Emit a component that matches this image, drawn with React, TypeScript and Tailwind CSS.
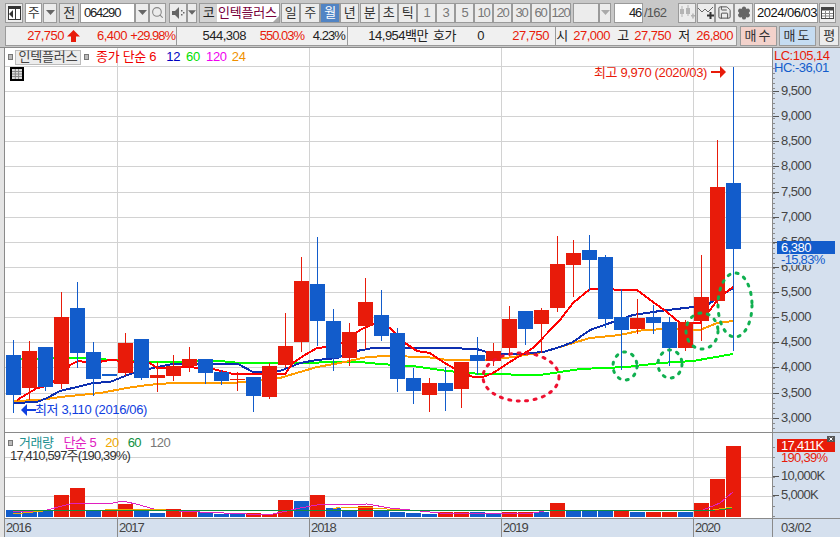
import React from "react";
import { Search, Save, Settings } from "lucide-react";

const RED = "#e81b0a";
const BLUE = "#125ccb";

// x, up?, high, bodyTop, bodyBottom, low (page px)
const candles: [number, number, number, number, number, number][] = [
  [6, 0, 340, 355, 395, 413], [22, 1, 341, 351, 388, 400], [38, 0, 347, 347, 387, 391], [54, 1, 292, 317, 384, 389],
  [70, 0, 282, 308, 353, 368], [86, 0, 342, 352, 379, 396], [102, 0, 374, 374, 376, 376], [118, 1, 333, 343, 373, 376],
  [134, 0, 339, 339, 378, 380], [150, 1, 362, 375, 378, 392], [166, 1, 355, 366, 376, 381], [182, 1, 347, 359, 366, 372],
  [198, 0, 359, 359, 373, 384], [214, 0, 370, 372, 381, 385], [230, 1, 372, 379, 380, 391], [246, 0, 377, 377, 396, 412],
  [262, 1, 363, 366, 397, 399], [278, 1, 313, 346, 365, 368], [294, 1, 257, 281, 342, 352], [310, 0, 237, 284, 321, 346],
  [326, 0, 309, 321, 358, 371], [342, 1, 323, 332, 358, 366], [358, 1, 278, 302, 326, 349], [374, 0, 290, 315, 336, 341],
  [390, 0, 328, 333, 379, 392], [406, 0, 368, 378, 391, 404], [422, 1, 378, 383, 395, 412], [438, 0, 367, 383, 391, 411],
  [454, 1, 362, 362, 389, 408], [470, 0, 337, 355, 361, 375], [486, 1, 343, 351, 361, 366], [502, 1, 306, 319, 348, 356],
  [518, 0, 311, 311, 329, 345], [534, 1, 308, 310, 324, 353], [550, 1, 236, 264, 308, 312], [566, 1, 240, 253, 265, 297],
  [582, 0, 235, 250, 260, 291], [598, 0, 255, 257, 319, 328], [614, 0, 289, 317, 330, 370], [630, 1, 299, 318, 329, 334],
  [646, 0, 305, 317, 323, 334], [662, 0, 317, 322, 348, 366], [678, 1, 320, 322, 348, 351], [694, 1, 255, 297, 321, 341],
  [710, 1, 140, 187, 301, 305], [726, 0, 67, 183, 249, 351],
];

// x, up?, top (page px)
const volumes: [number, number, number][] = [
  [6, 0, 510], [22, 0, 511], [38, 0, 511], [54, 1, 495], [70, 1, 488], [86, 0, 510], [102, 1, 511], [118, 1, 504],
  [134, 0, 511], [150, 0, 513], [166, 1, 509], [182, 1, 511], [198, 0, 512], [214, 0, 514], [230, 0, 513], [246, 1, 513],
  [262, 1, 514], [278, 1, 500], [294, 0, 501], [310, 1, 495], [326, 0, 508], [342, 0, 510], [358, 1, 506], [374, 0, 511],
  [390, 0, 512], [406, 0, 513], [422, 0, 514], [438, 1, 512], [454, 1, 512], [470, 0, 512], [486, 0, 514], [502, 1, 512],
  [518, 1, 512], [534, 0, 512], [550, 1, 503], [566, 0, 511], [582, 0, 511], [598, 0, 511], [614, 1, 510], [630, 0, 512],
  [646, 1, 512], [662, 1, 512], [678, 0, 512], [694, 1, 503], [710, 1, 479], [726, 1, 446],
];

const ma60 = "13,359 80,358 150,362 220,361 240,363 280,363 360,362 380,364 413,366 447,371 480,374 540,375 560,372 580,369 627,367 660,363 693,361 733,354";
const ma24 = "13,401 40,400 60,397 100,393 127,388 147,385 173,383 233,383 280,378 300,372 317,367 340,363 367,357 387,356 427,357 447,360 487,360 513,357 543,352 560,347 590,338 620,335 643,330 670,329 700,330 717,323 733,321";
const ma12 = "14,403 37,402 47,398 60,391 77,387 93,383 110,382 130,374 157,367 173,364 200,364 238,364 253,372 280,371 300,363 317,360 337,358 357,351 373,348 447,348 477,349 493,354 520,354 543,352 560,347 573,342 590,330 610,323 633,315 660,311 693,307 707,305 733,288";
const ma6 = "17,400 37,388 43,387 62,377 70,365 78,361 93,363 110,360 150,363 157,368 173,368 187,367 213,369 233,374 285,374 293,363 303,356 317,348 337,346 360,330 377,322 390,328 405,343 417,351 430,353 443,362 457,370 473,377 483,377 493,373 513,360 533,348 560,320 573,303 590,289 637,290 653,302 667,312 680,323 700,323 710,310 720,297 733,287";

const volMa5 = "13,512 43,511 70,504 77,503 113,503 123,501 140,505 157,510 200,512 247,514 273,514 300,508 317,505 367,504 390,508 420,511 440,513 533,513 550,510 597,510 620,510 653,511 703,510 720,503 733,492";
const volMa20 = "13,514 43,511 167,509 333,509 340,507 373,508 400,510 550,510 713,510 732,507";
const volMa60 = "13,510 420,511 720,510 732,508";

const priceTicks = [66, 91, 116, 141, 166, 192, 217, 242, 267, 292, 317, 342, 367, 393, 418];
const gridX = [117, 309, 501, 693];

function Btn({ className = "", bg = "bg-[#ececec]", children }: { className?: string; bg?: string; children?: React.ReactNode }) {
  return (
    <div className={`flex h-[20px] shrink-0 items-center justify-center border border-[#9a9a9a] ${bg} ${className}`}>
      {children}
    </div>
  );
}

function Caret({ light }: { light?: boolean }) {
  return (
    <svg width="9" height="5" viewBox="0 0 9 5">
      <polygon points="0,0 9,0 4.5,5" fill={light ? "#aaa" : "#666"} />
    </svg>
  );
}

function Toolbar() {
  return (
    <div className="flex h-[24px] items-center pl-[5px] pt-[1px] text-[#333]">
      <Btn className="w-[18px]">
        <svg width="13" height="14" viewBox="0 0 13 14">
          <rect x="0.5" y="0.5" width="12" height="13" fill="#fff" stroke="#333" />
          <rect x="1" y="1" width="11" height="2" fill="#333" />
          <rect x="7" y="3" width="1" height="10" fill="#333" />
          <polygon points="5,4 5,12 1,8" fill="#333" />
        </svg>
      </Btn>
      <Btn className="ml-[2px] w-[17px]" bg="bg-white">주</Btn>
      <Btn className="ml-[1px] w-[14px]"><Caret /></Btn>
      <Btn className="ml-[2px] w-[20px]" bg="bg-[#e2e2e2]">전</Btn>
      <div className="ml-[1px] flex h-[20px] w-[55px] shrink-0 items-center border border-[#9a9a9a] bg-white pl-[3px] tracking-[-1.2px] text-[#222]">064290</div>
      <Btn className="w-[14px]"><Caret /></Btn>
      <Btn className="w-[17px]"><Search size={13} color="#888" strokeWidth={2} /></Btn>
      <Btn className="ml-[3px] w-[18px]">
        <svg width="13" height="12" viewBox="0 0 13 12">
          <polygon points="0,4 3,4 7,0 7,12 3,8 0,8" fill="#666" />
          <rect x="9" y="3" width="1.5" height="1.5" fill="#666" />
          <rect x="9" y="7" width="1.5" height="1.5" fill="#666" />
          <rect x="11" y="5" width="1.5" height="1.5" fill="#666" />
        </svg>
      </Btn>
      <Btn className="w-[10px]"><Caret /></Btn>
      <div className="relative ml-[2px] flex h-[20px] w-[81px] shrink-0 items-center border border-[#9a9a9a] bg-white">
        <span className="flex h-full w-[17px] items-center justify-center bg-[#d4d4d4] text-[#222]">코</span>
        <span className="pl-[1px] text-[13px] tracking-[-0.2px] text-[#78003c]">인텍플러스</span>
        <span className="absolute bottom-0 right-0 h-0 w-0 border-b-[6px] border-l-[6px] border-b-[#aaa] border-l-transparent" />
      </div>
      <Btn className="ml-[1px] w-[19px]">일</Btn>
      <Btn className="w-[20px]">주</Btn>
      <Btn className="w-[20px] text-white" bg="bg-[#5184c4]">월</Btn>
      <Btn className="w-[19px]">년</Btn>
      <Btn className="ml-[1px] w-[19px]">분</Btn>
      <Btn className="w-[19px]">초</Btn>
      <Btn className="w-[19px]">틱</Btn>
      <Btn className="w-[19px] tracking-[-1.2px] text-[#777]">1</Btn>
      <Btn className="w-[19px] tracking-[-1.2px] text-[#777]">3</Btn>
      <Btn className="w-[19px] tracking-[-1.2px] text-[#777]">5</Btn>
      <Btn className="w-[19px] tracking-[-1.2px] text-[#777]">10</Btn>
      <Btn className="w-[19px] tracking-[-1.2px] text-[#777]">20</Btn>
      <Btn className="w-[19px] tracking-[-1.2px] text-[#777]">30</Btn>
      <Btn className="w-[19px] tracking-[-1.2px] text-[#777]">60</Btn>
      <Btn className="w-[21px] tracking-[-1.2px] text-[#777]">120</Btn>
      <Btn className="ml-[2px] w-[26px]" />
      <Btn className="w-[12px]"><Caret light /></Btn>
      <div className="ml-[3px] flex h-[20px] w-[29px] shrink-0 items-center justify-end border border-[#9a9a9a] bg-white pr-[1px] tracking-[-1.2px] text-[#222]">46</div>
      <span className="w-[35px] shrink-0 pl-[1px] tracking-[-0.8px] text-[#555]">/162</span>
      <Btn className="w-[18px]">
        <svg width="16" height="15" viewBox="0 0 16 15" fill="#b4b4b4">
          <rect x="1" y="4" width="4" height="5" /><rect x="2.5" y="1" width="1" height="11" />
          <rect x="7" y="3" width="4" height="6" /><rect x="8.5" y="0" width="1" height="11" />
          <rect x="12" y="10" width="4" height="1.5" /><rect x="13.2" y="8.5" width="1.5" height="5" />
        </svg>
      </Btn>
      <Btn className="ml-[1px] w-[18px]">
        <svg width="16" height="15" viewBox="0 0 16 15">
          <polyline points="0,3 4,7 7,4 10,7 15,2" fill="none" stroke="#666" />
          <rect x="11.5" y="7" width="2" height="7" fill="#333" /><rect x="9" y="9.5" width="7" height="2" fill="#333" />
        </svg>
      </Btn>
      <Btn className="w-[19px]"><Save size={15} color="#555" strokeWidth={1.6} /></Btn>
      <Btn className="w-[19px]"><Settings size={14} color="#666" fill="#666" strokeWidth={2.5} /></Btn>
      <div className="ml-[1px] flex h-[20px] w-[64px] shrink-0 items-center border border-[#9a9a9a] bg-white pl-[2px] text-[#111]">2024/06/03</div>
      <Btn className="ml-[1px] w-[17px]">
        <svg width="13" height="12" viewBox="0 0 13 12">
          <rect x="0.5" y="0.5" width="12" height="11" fill="#fff" stroke="#444" />
          <rect x="1" y="1" width="11" height="2.5" fill="#444" />
          <path d="M1 6.5H12M1 9H12M4.5 4V11M8.5 4V11" stroke="#888" />
        </svg>
      </Btn>
    </div>
  );
}

function QuoteBar() {
  return (
    <div className="flex h-[23px] items-center pl-[5px] text-[#e81b0a]">
      <div className="flex h-[20px] w-[172px] shrink-0 items-center border border-[#9a9a9a] bg-[#f0f0f0]">
        <span className="w-[58px] text-right">27,750</span>
        <svg className="ml-[3px] shrink-0" width="13" height="12" viewBox="0 0 13 12"><polygon points="6.5,0 13,6.5 9,6.5 9,12 4,12 4,6.5 0,6.5" fill="#e81b0a" /></svg>
        <span className="w-[47px] text-right">6,400</span>
        <span className="w-[48px] text-right tracking-[-1px]">+29.98%</span>
      </div>
      <div className="flex h-[20px] w-[171px] shrink-0 items-center border border-l-0 border-[#9a9a9a] bg-[#f0f0f0]">
        <span className="w-[69px] text-right text-[#222]">544,308</span>
        <span className="w-[58px] text-right tracking-[-1px]">550.03%</span>
        <span className="w-[41px] text-right tracking-[-0.9px] text-[#222]">4.23%</span>
      </div>
      <div className="flex h-[20px] w-[208px] shrink-0 items-center border border-l-0 border-[#9a9a9a] bg-[#f0f0f0]">
        <span className="w-[80px] text-right text-[#222]">14,954백만</span>
        <span className="ml-[5px] w-[24px] text-[#222]">호가</span>
        <span className="w-[27px] text-right text-[#222]">0</span>
        <span className="w-[65px] text-right">27,750</span>
      </div>
      <div className="flex h-[20px] w-[181px] shrink-0 items-center border border-l-0 border-[#9a9a9a] bg-[#f0f0f0]">
        <span className="w-[12px] text-center text-[#222]">시</span>
        <span className="w-[42px] text-right">27,000</span>
        <span className="ml-[7px] w-[12px] text-center text-[#222]">고</span>
        <span className="w-[42px] text-right">27,750</span>
        <span className="ml-[7px] w-[12px] text-center text-[#222]">저</span>
        <span className="w-[43px] text-right">26,800</span>
      </div>
      <Btn className="ml-[3px] w-[37px] tracking-[2px] text-[#333]" bg="bg-[#f3d2cb]">매수</Btn>
      <Btn className="ml-[2px] w-[37px] tracking-[2px] text-[#333]" bg="bg-[#c5dcf2]">매도</Btn>
      <Btn className="ml-[3px] w-[20px] text-[#333]">평</Btn>
    </div>
  );
}

function Candles() {
  return (
    <g shapeRendering="crispEdges">
      {candles.map(([x, up, hi, top, bot, lo]) => {
        const c = up ? RED : BLUE;
        return (
          <g key={x}>
            <rect x={x + 7} y={hi} width={1} height={lo - hi} fill={c} />
            <rect x={x} y={top} width={15} height={Math.max(bot - top, 1)} fill={c} />
          </g>
        );
      })}
    </g>
  );
}

function PriceChart() {
  return (
    <svg width="767" height="384" viewBox="5 48 767 384" className="block shrink-0 bg-white">
      <g shapeRendering="crispEdges" fill="#d2d2d2">
        {priceTicks.map((y) => <rect key={y} x="5" y={y} width="767" height="1" />)}
        {gridX.map((x) => <rect key={x} x={x} y="48" width="1" height="384" />)}
      </g>
      <g fill="none" strokeWidth="2" shapeRendering="crispEdges">
        <polyline points={ma60} stroke="#00ff00" />
        <polyline points={ma24} stroke="#ff9c00" />
        <polyline points={ma12} stroke="#0d2fb0" />
        <polyline points={ma6} stroke="#ff0000" />
      </g>
      <Candles />
      <g fill="none" strokeWidth="3" strokeDasharray="2 6.5" strokeLinecap="round">
        <ellipse cx="521" cy="377" rx="38" ry="24" stroke="#ee1030" />
        <ellipse cx="625" cy="366" rx="12" ry="14" stroke="#10b050" />
        <ellipse cx="670" cy="364" rx="12" ry="14" stroke="#10b050" />
        <ellipse cx="702" cy="331" rx="16" ry="18" stroke="#10b050" />
        <ellipse cx="735" cy="305" rx="17" ry="32" stroke="#10b050" />
      </g>
      <text x="594" y="77" className="fill-[#e81b0a] text-[13px] tracking-[-0.35px]">최고 9,970 (2020/03)</text>
      <rect x="711" y="71" width="10" height="2" fill="#e81b0a" shapeRendering="crispEdges" />
      <polygon points="720,66 726,72 720,78" fill="#e81b0a" />
      <text x="35" y="414" className="fill-[#1040e0] text-[13px] tracking-[-0.35px]">최저 3,110 (2016/06)</text>
      <rect x="26" y="409" width="10" height="2" fill="#1040e0" shapeRendering="crispEdges" />
      <polygon points="27,404 21,410 27,416" fill="#1040e0" />
    </svg>
  );
}

function PriceAxis() {
  const minor = [];
  for (let y = 68; y < 430; y += 5) minor.push(y);
  const labels = ["9,500", "9,000", "8,500", "8,000", "7,500", "7,000", "6,500", "6,000", "5,500", "5,000", "4,500", "4,000", "3,500", "3,000"];
  return (
    <svg width="68" height="384" viewBox="772 48 68 384" className="block shrink-0 bg-[#d5e0ee]">
      <rect x="772" y="48" width="1" height="384" fill="#8a8a8a" shapeRendering="crispEdges" />
      {minor.map((y) => <rect key={y} x="773" y={y} width="2" height="1" fill="#8a8a8a" shapeRendering="crispEdges" />)}
      {priceTicks.slice(1).map((y, i) => (
        <g key={y}>
          <rect x="773" y={y} width="6" height="1" fill="#555" shapeRendering="crispEdges" />
          <text x="781" y={y + 4} className="fill-[#444] text-[13px] tracking-[-0.5px]">{labels[i]}</text>
        </g>
      ))}
      <text x="774" y="60" className="fill-[#e81b0a] text-[13px] tracking-[-0.5px]">LC:105,14</text>
      <text x="774" y="72" className="fill-[#125ccb] text-[13px] tracking-[-0.5px]">HC:-36,01</text>
      <rect x="777" y="241" width="58" height="13" fill="#125ccb" shapeRendering="crispEdges" />
      <text x="781" y="252" className="fill-white text-[13px] tracking-[-0.5px]">6,380</text>
      <rect x="777" y="254" width="58" height="11" fill="#d5e0ee" shapeRendering="crispEdges" />
      <text x="781" y="264" className="fill-[#125ccb] text-[13px] tracking-[-0.7px]">-15,83%</text>
    </svg>
  );
}

function Legend() {
  return (
    <div className="absolute left-[3px] top-0 flex h-[18px] items-center text-[13px] tracking-[-0.3px]">
      <span className="h-[6px] w-[5px] border border-[#777] bg-[#bbb]" />
      <span className="ml-[2px] flex h-[15px] w-[66px] items-center justify-center border border-[#bbb] bg-[#ececec] tracking-[-0.2px] text-[#444]">인텍플러스</span>
      <span className="ml-[3px] h-[6px] w-[5px] border border-[#777] bg-[#bbb]" />
      <span className="ml-[7px] text-[#f00000]">종가 단순 6</span>
      <span className="ml-[10px] text-[#0000c0]">12</span>
      <span className="ml-[6px] text-[#00e000]">60</span>
      <span className="ml-[6px] text-[#f000f0]">120</span>
      <span className="ml-[5px] text-[#f09000]">24</span>
    </div>
  );
}

function VolumeChart() {
  return (
    <svg width="767" height="85" viewBox="5 433 767 85" className="block shrink-0 bg-white">
      <g shapeRendering="crispEdges" fill="#d2d2d2">
        {[457, 477, 496].map((y) => <rect key={y} x="5" y={y} width="767" height="1" />)}
        {gridX.map((x) => <rect key={x} x={x} y="433" width="1" height="85" />)}
      </g>
      <g shapeRendering="crispEdges">
        {volumes.map(([x, up, top]) => (
          <rect key={x} x={x} y={top} width={15} height={517 - top} fill={up ? RED : BLUE} />
        ))}
      </g>
      <g fill="none" shapeRendering="crispEdges">
        <polyline points={volMa5} stroke="#e020c0" />
        <polyline points={volMa20} stroke="#f0a800" />
        <polyline points={volMa60} stroke="#109040" />
      </g>
    </svg>
  );
}

function VolumeAxis() {
  return (
    <svg width="68" height="85" viewBox="772 433 68 85" className="block shrink-0 bg-[#d5e0ee]">
      <rect x="772" y="433" width="1" height="85" fill="#8a8a8a" shapeRendering="crispEdges" />
      {[447, 457, 467, 477, 486, 496, 506, 516].map((y) => (
        <rect key={y} x="773" y={y} width="2" height="1" fill="#8a8a8a" shapeRendering="crispEdges" />
      ))}
      <rect x="773" y="476" width="6" height="1" fill="#555" shapeRendering="crispEdges" />
      <rect x="773" y="495" width="6" height="1" fill="#555" shapeRendering="crispEdges" />
      <rect x="777" y="439" width="58" height="13" fill="#e81b0a" shapeRendering="crispEdges" />
      <text x="781" y="450" className="fill-white text-[13px] tracking-[-0.7px]">17,411K</text>
      <text x="781" y="462" className="fill-[#e81b0a] text-[13px] tracking-[-0.7px]">190,39%</text>
      <text x="781" y="480" className="fill-[#444] text-[13px] tracking-[-0.7px]">10,000K</text>
      <text x="781" y="499" className="fill-[#444] text-[13px] tracking-[-0.7px]">5,000K</text>
      <rect x="827" y="436" width="8" height="6" fill="#555" shapeRendering="crispEdges" />
      <path d="M829.5 437.5L832.5 440.5M832.5 437.5L829.5 440.5" stroke="#fff" />
    </svg>
  );
}

function TimeAxis() {
  const years = [
    { label: "2016", w: "w-[112px]" },
    { label: "2017", w: "w-[192px]" },
    { label: "2018", w: "w-[192px]" },
    { label: "2019", w: "w-[192px]" },
    { label: "2020", w: "w-[79px]" },
  ];
  return (
    <div className="flex h-[19px] border-t border-[#8a8a8a] bg-[#d5e0ee] tracking-[-1.1px] text-[#444]">
      {years.map((y, i) => (
        <div key={y.label} className={`${y.w} flex items-center ${i > 0 ? "border-l border-[#8a8a8a]" : ""} pl-[1px]`}>{y.label}</div>
      ))}
      <div className="flex w-[68px] items-center border-l border-[#8a8a8a] pl-[8px] tracking-[-0.5px]">03/02</div>
    </div>
  );
}

export default function App() {
  return (
    <div className="flex h-[537px] w-[840px] flex-col overflow-hidden bg-[#c8c8c8] font-['Liberation_Sans','Noto_Sans_CJK_KR',sans-serif] text-[13px] tracking-[-0.5px]">
      <Toolbar />
      <QuoteBar />
      <div className="flex-1 border-t border-[#8a8a8a] bg-[#e4e4e4] pl-[4px]">
        <div className="flex flex-col border-l border-[#8a8a8a]">
          <div className="relative flex">
            <PriceChart />
            <PriceAxis />
            <Legend />
            <div className="absolute left-[5px] top-[19px] flex h-[14px] w-[14px] items-center justify-center border-2 border-black bg-[#ddd]">
              <svg width="10" height="10" viewBox="0 0 10 10">
                <path d="M0 2.5H10M0 5H10M0 7.5H10M3.3 0V10M6.6 0V10" stroke="#888" />
              </svg>
            </div>
          </div>
          <div className="relative flex border-t border-[#8a8a8a]">
            <VolumeChart />
            <VolumeAxis />
            <div className="absolute left-[3px] top-[3px] flex flex-col text-[13px] leading-[14px]">
              <div className="flex items-center">
                <span className="h-[6px] w-[5px] border border-[#777] bg-[#bbb]" />
                <span className="ml-[6px] text-[#209090]">거래량</span>
                <span className="ml-[10px] text-[#e020c0]">단순 5</span>
                <span className="ml-[9px] text-[#f0a800]">20</span>
                <span className="ml-[9px] text-[#109040]">60</span>
                <span className="ml-[9px] text-[#777]">120</span>
              </div>
              <span className="mt-[-1px] pl-[2px] tracking-[-0.85px] text-[#333]">17,410,597주(190,39%)</span>
            </div>
          </div>
          <TimeAxis />
        </div>
      </div>
    </div>
  );
}
